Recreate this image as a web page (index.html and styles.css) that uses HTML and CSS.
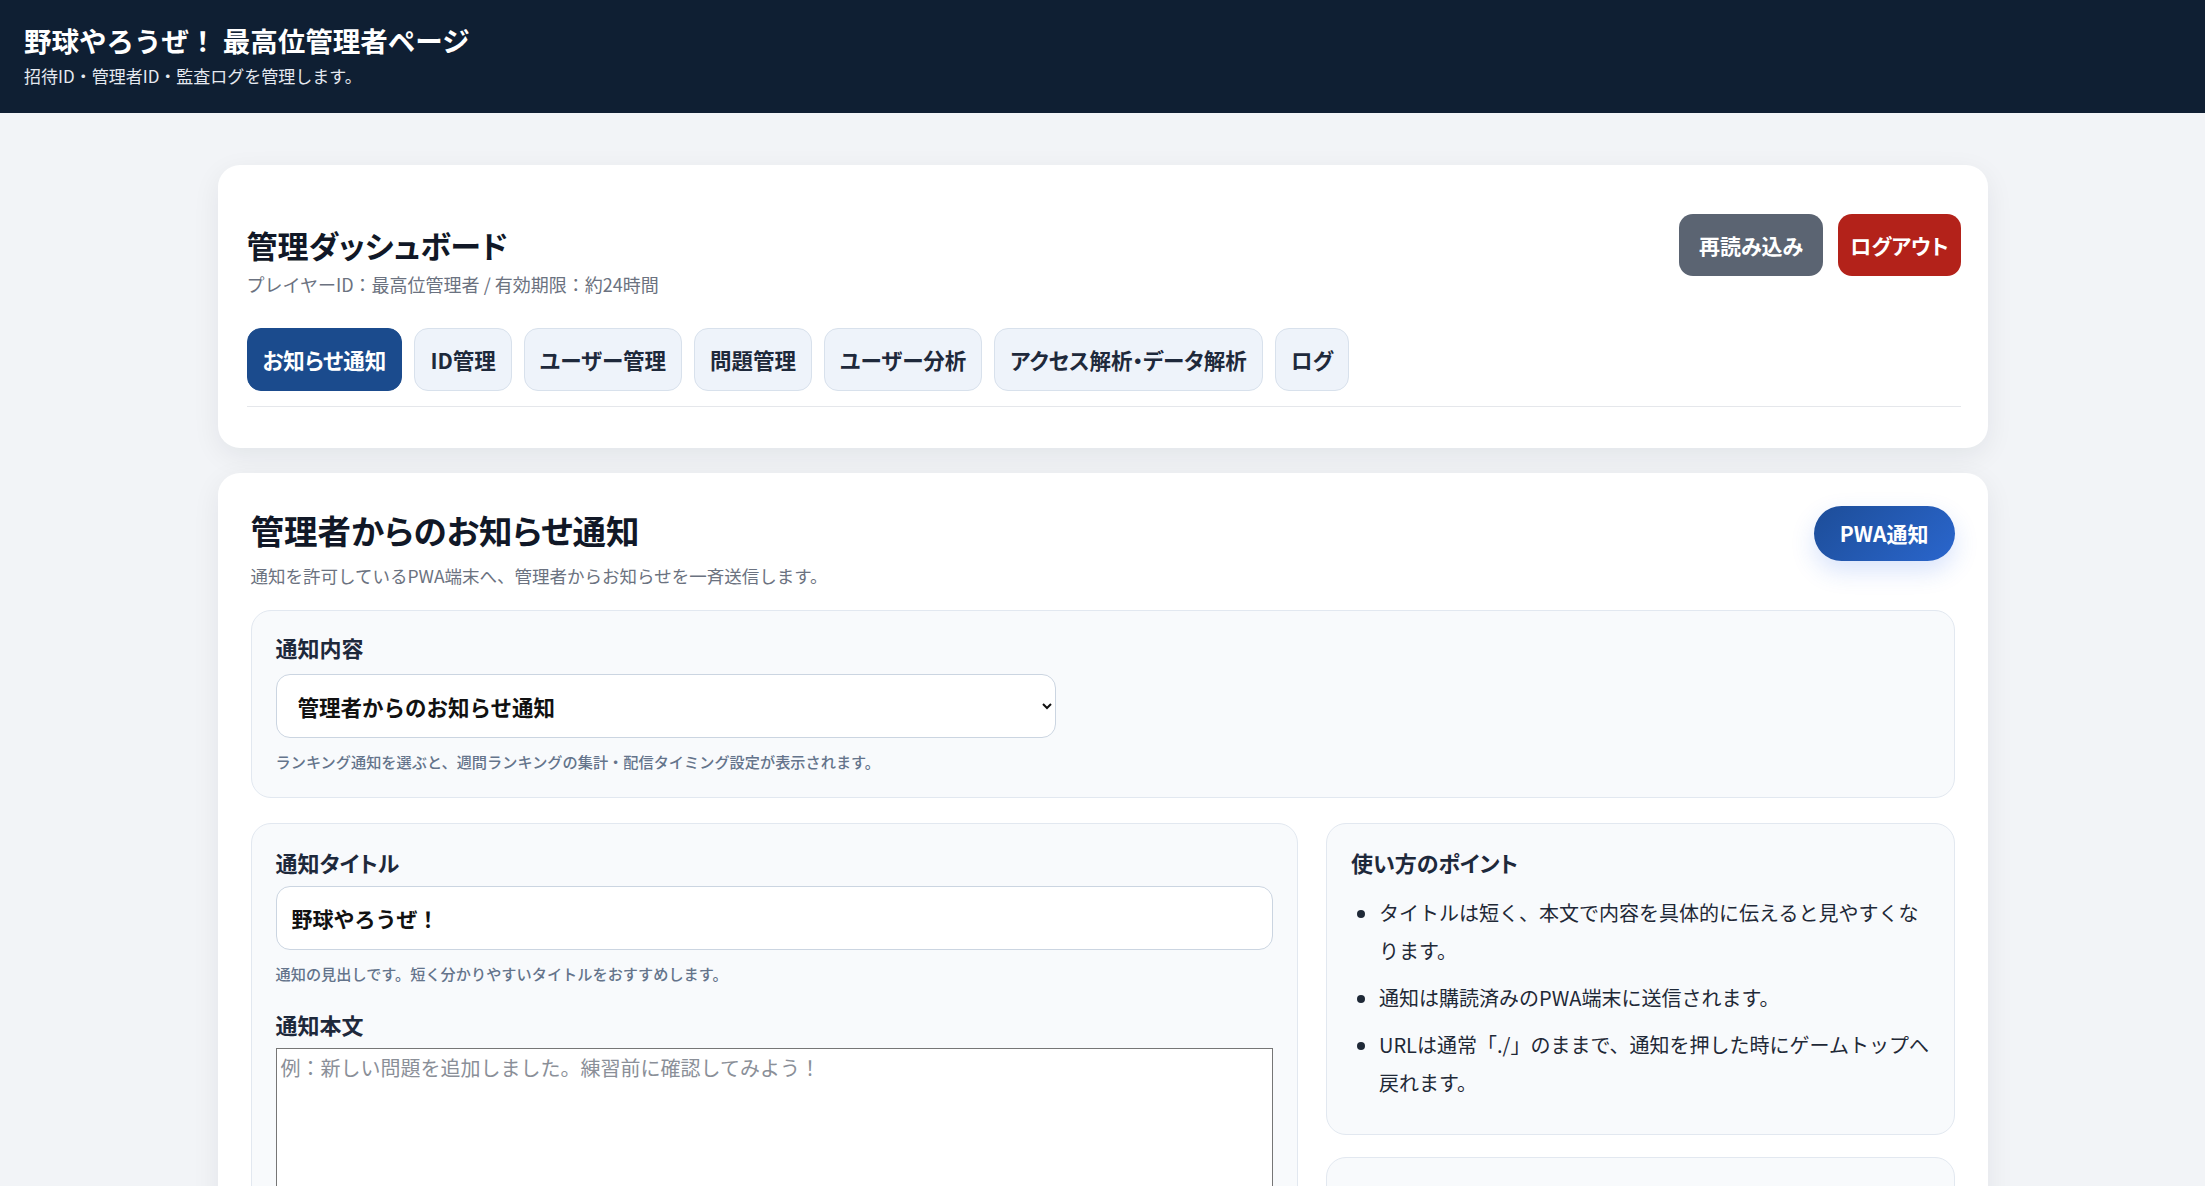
FILE: index.html
```html
<!DOCTYPE html>
<html lang="ja">
<head>
  <meta charset="UTF-8">
  <meta name="viewport" content="width=device-width, initial-scale=1.0">
  <title>最高位管理者ページ</title>
  <link rel="stylesheet" href="styles.css">
</head>
<body>
  <header class="top">
    <h1>野球やろうぜ！ 最高位管理者ページ</h1>
    <p>招待ID・管理者ID・監査ログを管理します。</p>
  </header>

  <main class="wrap">

    <section class="card dash">
      <div class="dash-head">
        <div>
          <h2>管理ダッシュボード</h2>
          <p class="sub">プレイヤーID：最高位管理者 / 有効期限：約24時間</p>
        </div>
        <div class="actions">
          <button class="btn btn-gray">再読み込み</button>
          <button class="btn btn-red">ログアウト</button>
        </div>
      </div>

      <nav class="tabs">
        <button class="tab active">お知らせ通知</button>
        <button class="tab">ID管理</button>
        <button class="tab">ユーザー管理</button>
        <button class="tab">問題管理</button>
        <button class="tab">ユーザー分析</button>
        <button class="tab">アクセス解析・データ解析</button>
        <button class="tab">ログ</button>
      </nav>
    </section>

    <section class="card notice">
      <div class="notice-head">
        <div>
          <h2>管理者からのお知らせ通知</h2>
          <p class="sub">通知を許可しているPWA端末へ、管理者からお知らせを一斉送信します。</p>
        </div>
        <span class="pill">PWA通知</span>
      </div>

      <div class="box box-first">
        <label class="label" for="kind">通知内容</label>
        <select id="kind" class="select">
          <option>管理者からのお知らせ通知</option>
          <option>週間ランキング通知</option>
        </select>
        <p class="hint">ランキング通知を選ぶと、週間ランキングの集計・配信タイミング設定が表示されます。</p>
      </div>

      <div class="cols">
        <div class="box">
          <label class="label" for="title">通知タイトル</label>
          <input id="title" class="input" type="text" value="野球やろうぜ！">
          <p class="hint">通知の見出しです。短く分かりやすいタイトルをおすすめします。</p>

          <label class="label label-gap" for="body">通知本文</label>
          <textarea id="body" class="area" placeholder="例：新しい問題を追加しました。練習前に確認してみよう！"></textarea>

          <button class="btn send">通知を送信</button>
        </div>

        <div class="side">
          <div class="box box-tips">
            <h3 class="label">使い方のポイント</h3>
            <ul class="points">
              <li>タイトルは短く、本文で内容を具体的に伝えると見やすくなります。</li>
              <li>通知は購読済みのPWA端末に送信されます。</li>
              <li>URLは通常「./」のままで、通知を押した時にゲームトップへ戻れます。</li>
            </ul>
          </div>
          <div class="box">
            <h3 class="label">送信履歴</h3>
            <p class="hint">まだ送信履歴はありません。</p>
          </div>
        </div>
      </div>
    </section>

  </main>
</body>
</html>
```

FILE: styles.css
```css
    body{
      margin: 0;
      background-color: #f2f4f7;
      color: #111827;
      font-family: "Noto Sans CJK JP", "Noto Sans", sans-serif;
    }
    button, input, select, textarea{
      font-family: inherit;
    }

    /* header */
    .top{
      background-color: #0f1f33;
      color: #fff;
      padding: 23px 24px 25px;
    }
    .top h1{
      margin: 0;
      font-size: 27.5px;
      line-height: 1.3;
    }
    .top p{
      margin: 4px 0 0;
      font-size: 17px;
      line-height: 1.5;
      color: #e5e9f0;
    }

    .wrap{
      max-width: 1770px;
      margin: 0 auto;
      padding: 52px 0 40px;
      display: flex;
      flex-direction: column;
      gap: 25px;
    }
    .card{
      background-color: #fff;
      border-radius: 22px;
      box-shadow: 0 8px 28px rgba(15, 23, 42, 0.07);
    }
    .card h2{
      margin: 0;
      color: #111827;
      line-height: 1.3;
      font-feature-settings: "palt";
    }
    .sub{
      margin: 0;
      color: #6b7280;
      line-height: 1.5;
    }

    /* dashboard card */
    .dash{
      padding: 28px 27px 41px 29px;
    }
    .dash-head{
      display: flex;
      justify-content: space-between;
      align-items: flex-start;
      margin-top: 21px;
    }
    .dash h2{
      font-size: 31px;
      margin-top: 11px;
    }
    .dash .sub{
      font-size: 18px;
      margin-top: 5px;
    }
    .actions{
      display: flex;
      gap: 15px;
    }
    .btn{
      height: 62px;
      padding: 0 20px;
      border: 0;
      border-radius: 14px;
      color: #fff;
      font-size: 21px;
      font-weight: 700;
      font-feature-settings: "palt";
    }
    .btn-gray{ background-color: #5b6472; }
    .btn-red{
      background-color: #b3221a;
      padding: 0 12px;
    }

    .tabs{
      display: flex;
      gap: 12px;
      margin-top: 30px;
      padding-bottom: 15px;
      border-bottom: 1px solid #e5e7eb;
    }
    .tab{
      height: 63px;
      padding: 0 15px;
      background-color: #eef3fa;
      border: 1px solid #d8e1ec;
      border-radius: 14px;
      color: #1e293b;
      font-size: 21.5px;
      font-weight: 700;
      font-feature-settings: "palt";
    }
    .tab.active{
      background-color: #1b4b8d;
      border-color: #1b4b8d;
      color: #fff;
    }

    /* notice card */
    .notice{
      padding: 33px;
    }
    .notice-head{
      display: flex;
      justify-content: space-between;
      align-items: flex-start;
    }
    .notice h2{
      font-size: 33.5px;
      margin-top: 2px;
    }
    .notice .sub{
      font-size: 17.5px;
      margin-top: 12px;
    }
    .pill{
      display: flex;
      align-items: center;
      height: 55px;
      padding: 0 26px;
      border-radius: 28px;
      background: linear-gradient(135deg, #1d4d98, #2a66cd);
      box-shadow: 0 10px 24px rgba(37, 99, 235, 0.18);
      color: #fff;
      font-size: 21px;
      font-weight: 700;
      font-feature-settings: "palt";
    }

    .box{
      background-color: #f8fafc;
      border: 1px solid #e2e8f0;
      border-radius: 20px;
      padding: 23px 24px 24px;
    }
    .box-first{
      margin-top: 21px;
      padding-top: 21px;
    }
    .box-tips{
      padding-right: 20px;
    }
    .label{
      display: block;
      margin: 0;
      font-size: 22px;
      font-weight: 700;
      line-height: 1.4;
      color: #1e293b;
      font-feature-settings: "palt";
    }
    .label-gap{
      margin-top: 23px;
    }
    .select{
      display: block;
      width: 780px;
      height: 64px;
      margin-top: 11px;
      padding: 0 17px;
      background-color: #fff;
      border: 1px solid #cbd5e1;
      border-radius: 14px;
      color: #111;
      font-size: 21.5px;
      font-weight: 700;
    }
    .hint{
      margin: 11px 0 0;
      font-size: 15.2px;
      line-height: 1.6;
      color: #64748b;
      font-weight: 500;
    }

    .cols{
      display: grid;
      grid-template-columns: 5fr 3fr;
      gap: 28px;
      margin-top: 25px;
      align-items: start;
    }
    .input{
      display: block;
      box-sizing: border-box;
      width: 100%;
      height: 64px;
      margin-top: 8px;
      padding: 0 15px;
      background-color: #fff;
      border: 1px solid #cbd5e1;
      border-radius: 14px;
      color: #111;
      font-size: 21px;
      font-weight: 700;
    }
    .area{
      display: block;
      box-sizing: border-box;
      width: 100%;
      height: 220px;
      margin-top: 9px;
      padding: 4px 4px;
      border: 1px solid #767676;
      font-size: 20px;
      resize: vertical;
    }
    .area::placeholder{
      color: #8a8f98;
    }
    .send{
      margin-top: 20px;
      background-color: #1b4b8d;
    }

    .side{
      display: flex;
      flex-direction: column;
      gap: 22px;
    }
    .points{
      margin: 16px 0 8px;
      padding-left: 28px;
      font-size: 20px;
      line-height: 38px;
      color: #1f2937;
    }
    .points li + li{
      margin-top: 9px;
    }
```
